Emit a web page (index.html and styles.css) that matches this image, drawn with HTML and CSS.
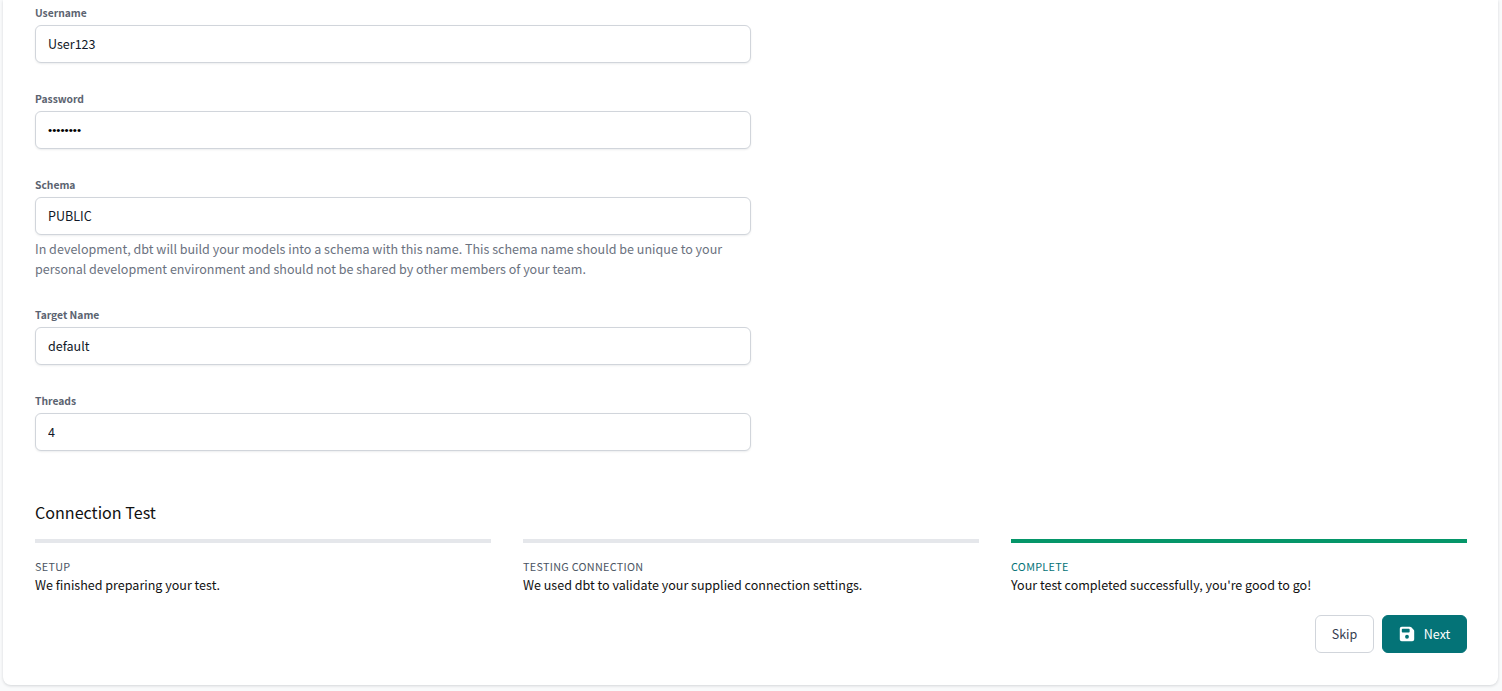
FILE: index.html
```html
<!DOCTYPE html>
<html lang="en">
<head>
<meta charset="utf-8">
<title>Connection settings</title>
<link rel="stylesheet" href="styles.css">
</head>
<body>
<main class="card">
  <form class="form">
    <div class="field">
      <label class="label">Username</label>
      <input class="input" type="text" value="User123">
    </div>
    <div class="field">
      <label class="label">Password</label>
      <input class="input input-secret" type="password" value="password">
    </div>
    <div class="field">
      <label class="label">Schema</label>
      <input class="input" type="text" value="PUBLIC">
      <p class="help">In development, dbt will build your models into a schema with this name. This schema name should be unique to your personal development environment and should not be shared by other members of your team.</p>
    </div>
    <div class="field">
      <label class="label">Target Name</label>
      <input class="input" type="text" value="default">
    </div>
    <div class="field">
      <label class="label">Threads</label>
      <input class="input" type="text" value="4">
    </div>
  </form>
  <h2 class="title">Connection Test</h2>
  <div class="steps">
    <div class="step">
      <div class="bar"></div>
      <div class="step-name">Setup</div>
      <div class="step-text">We finished preparing your test.</div>
    </div>
    <div class="step">
      <div class="bar"></div>
      <div class="step-name">Testing Connection</div>
      <div class="step-text">We used dbt to validate your supplied connection settings.</div>
    </div>
    <div class="step">
      <div class="bar bar-done"></div>
      <div class="step-name step-name-done">Complete</div>
      <div class="step-text">Your test completed successfully, you're good to go!</div>
    </div>
  </div>
  <div class="actions">
    <button class="btn btn-plain" type="button">Skip</button>
    <button class="btn btn-primary" type="button">
      <svg class="icon" viewBox="0 0 20 20" aria-hidden="true"><path fill="currentColor" fill-rule="evenodd" d="M3.5 1h10.2c.6 0 1.2.2 1.7.7l2.9 2.9c.4.4.7 1 .7 1.7v10.2c0 1.400-1.100 2.500-2.500 2.500h-13C2.100 19 1 17.900 1 16.500v-13C1 2.100 2.100 1 3.500 1zM4.500 3.500c-.6 0-1 .4-1 1v2.700c0 .6.4 1 1 1h7.800c.6 0 1-.4 1-1V4.500c0-.6-.4-1-1-1H4.500zM10 15.800a2.400 2.400 0 1 0 0-4.800 2.400 2.400 0 0 0 0 4.800z"/></svg>
      <span>Next</span>
    </button>
  </div>
</main>
</body>
</html>
```
FILE: styles.css
```css
* {
  box-sizing: border-box;
}

html,
body {
  margin: 0;
  height: 691px;
  overflow: hidden;
}

body {
  background: #f9fafb;
  font-family: "Noto Sans CJK SC", "Noto Sans", sans-serif;
  font-size: 12.54px;
  line-height: 20px;
  color: #111;
}

.card {
  height: 685px;
  margin: 0 4px 0 3px;
  padding: 3px 32px 0;
  background: #fff;
  border-radius: 0 0 8px 8px;
  box-shadow: 0 1px 3px rgba(17, 24, 39, 0.16);
}

.form {
  width: 716px;
}

.field {
  margin-bottom: 26px;
}

.label {
  display: block;
  margin-bottom: 2px;
  font-size: 10.3px;
  font-weight: 600;
  color: #5b6370;
}

.input {
  display: block;
  width: 100%;
  height: 38px;
  padding: 0 12px 2px;
  font: inherit;
  color: #111827;
  background: #fff;
  border: 1px solid #d1d5db;
  border-radius: 6px;
  box-shadow: 0 1px 2px rgba(17, 24, 39, 0.08);
  outline: none;
}

.input-secret {
  padding-bottom: 0;
  font-family: "Liberation Sans", sans-serif;
  font-size: 11.8px;
  color: #000;
}

.help {
  margin: 4px 0 0;
  color: #6b7280;
}

.title {
  margin: 47px 0 0;
  font-size: 16.1px;
  line-height: 28px;
  font-weight: 400;
  color: #111;
}

.steps {
  display: flex;
  gap: 32px;
  width: 1432px;
  margin-top: 13px;
}

.step {
  flex: 1 1 0;
}

.bar {
  height: 4px;
  margin-bottom: 15px;
  background: #e5e7eb;
}

.bar-done {
  background: #059669;
}

.step-name {
  font-size: 10.8px;
  line-height: 16px;
  letter-spacing: 0.3px;
  text-transform: uppercase;
  color: #4b5563;
}

.step-name-done {
  color: #047377;
}

.step-text {
  margin-top: 1px;
  color: #111;
}

.actions {
  display: flex;
  justify-content: flex-end;
  gap: 8px;
  width: 1432px;
  margin-top: 20px;
}

.btn {
  display: inline-flex;
  align-items: center;
  justify-content: center;
  height: 38px;
  font: inherit;
  border-radius: 6px;
  cursor: pointer;
}

.btn-plain {
  width: 59px;
  color: #374151;
  background: #fff;
  border: 1px solid #d1d5db;
}

.btn-primary {
  gap: 9px;
  width: 85px;
  color: #fff;
  background: #047377;
  border: 1px solid #047377;
}

.icon {
  width: 16px;
  height: 16px;
}
```
